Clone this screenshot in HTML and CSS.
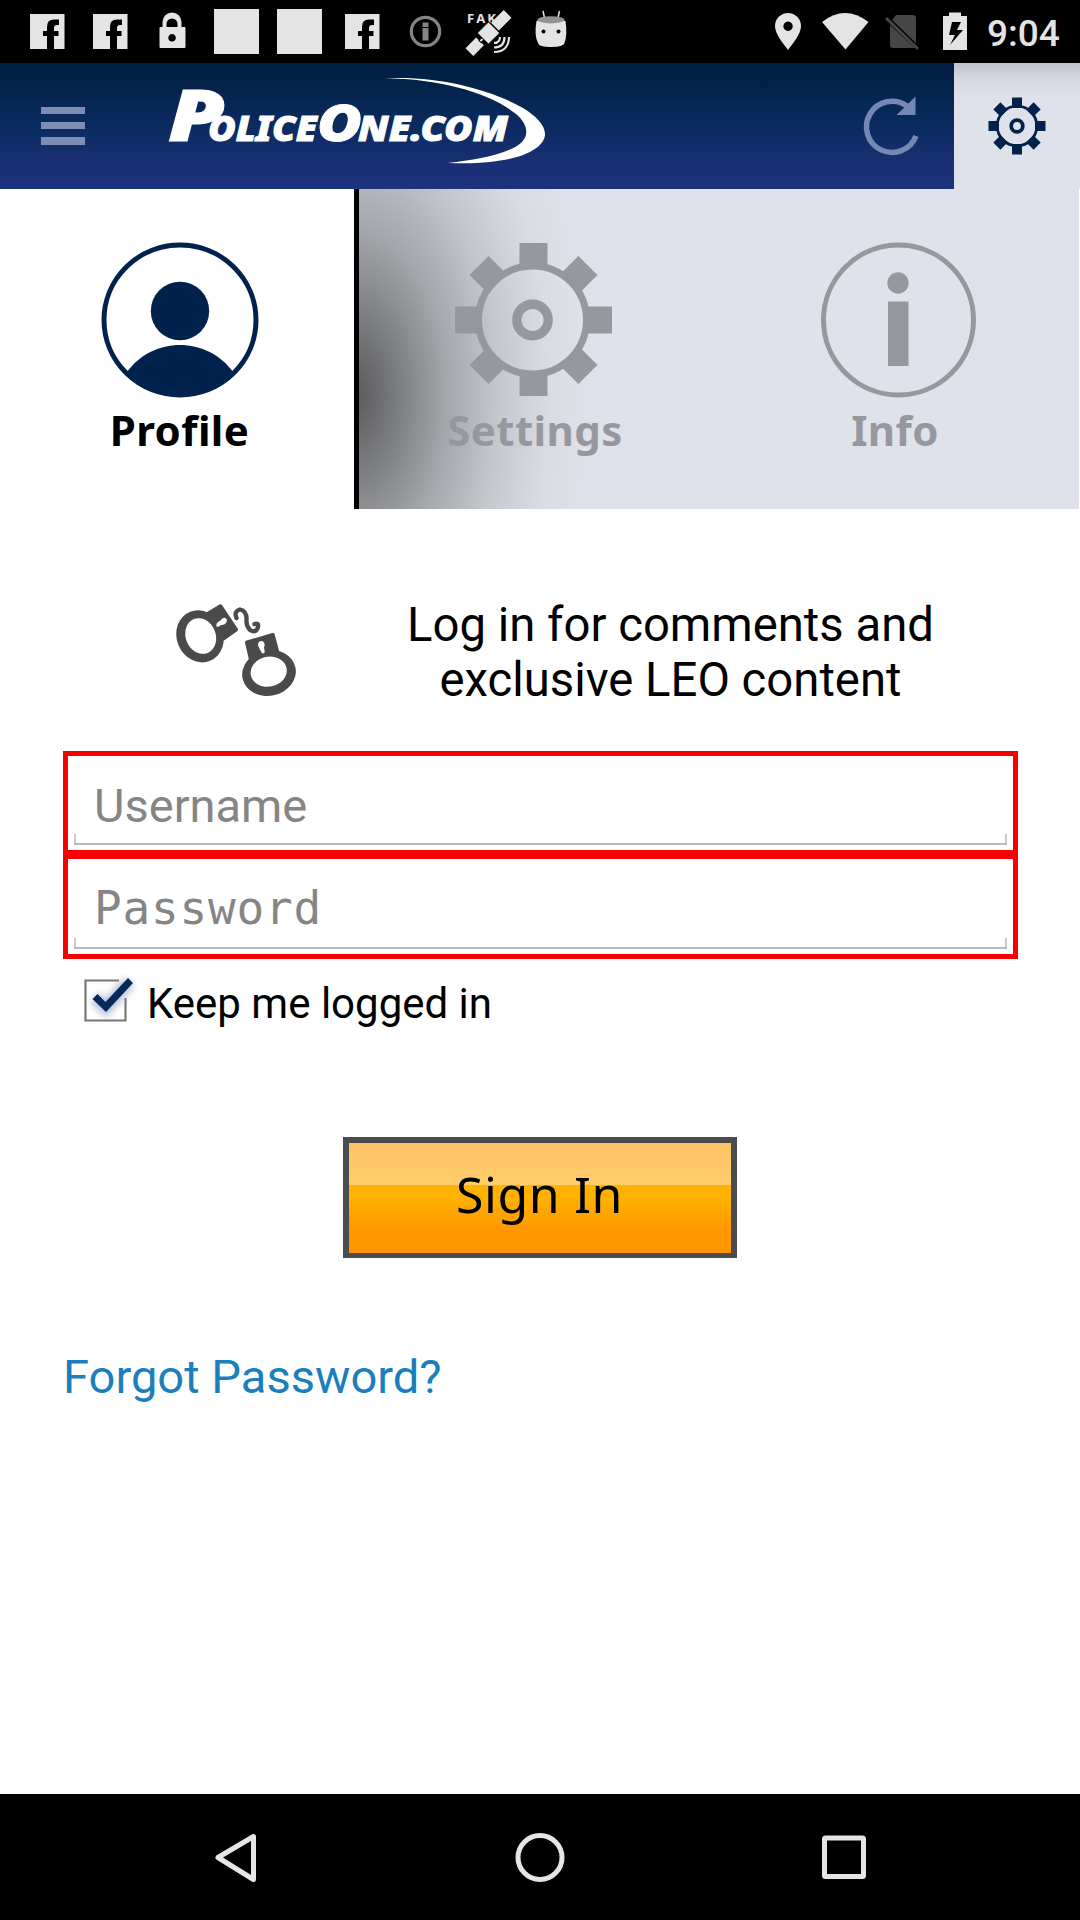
FILE: index.html
```html
<!DOCTYPE html>
<html lang="en">
<head>
<meta charset="utf-8">
<title>PoliceOne.com</title>
<link rel="stylesheet" href="styles.css">
</head>
<body>
<div class="status">
  <div class="notifications">
    <svg viewBox="0 0 45 45"><path d="M5 5h34.500v35H29V27h4.500v-5H29v-3q0-3 3-3h2v-5.500h-5q-7 0-7 7V22h-4v5h4v13H5z"/></svg>
    <svg viewBox="0 0 45 45"><path d="M5 5h34.500v35H29V27h4.500v-5H29v-3q0-3 3-3h2v-5.500h-5q-7 0-7 7V22h-4v5h4v13H5z"/></svg>
    <svg viewBox="0 0 45 45"><path fill-rule="evenodd" d="M8.500 18h3v-5a9.500 9.500 0 0 1 19 0v5h3q1 0 1 1v19q0 1-1 1h-24q-1 0-1-1V19q0-1 1-1zM15.500 18h11v-3a5.500 5.500 0 0 0-11 0zM21 25a3.800 3.800 0 1 0 .1 0z"/></svg>
    <svg viewBox="0 0 45 45"><path d="M0 0h45v45H0z"/></svg>
    <svg viewBox="0 0 45 45"><path d="M0 0h45v45H0z"/></svg>
    <svg viewBox="0 0 45 45"><path d="M5 5h34.500v35H29V27h4.500v-5H29v-3q0-3 3-3h2v-5.500h-5q-7 0-7 7V22h-4v5h4v13H5z"/></svg>
    <svg viewBox="0 0 45 45"><g class="dim"><circle cx="22.500" cy="22.500" r="14.200" fill="none" stroke="#858585" stroke-width="3.200"/><path d="M19.500 13.500h6v4.500h-6zM19.500 19h6v12.500h-6z"/></g></svg>
    <svg viewBox="0 0 45 45"><text class="fake" x="1" y="14" textLength="29">FAK</text><g transform="translate(22.500 24) rotate(-45)"><path d="M-27-5.500h15v11h-15zM9-5.500h18v11H9z"/><path d="M-8-8h16v16H-8zM-12-1.500h4v3h-4z" stroke="#000" stroke-width="1"/></g><path d="M28 34c5 0 6-4 6-6M28 38.500c8 0 10.500-5 10.500-10.500M28 43c11 0 15-7 15-15" fill="none" stroke="#e4e4e4" stroke-width="2.200"/></svg>
    <svg viewBox="-5 0 45 45"><path d="M9 2l2 9M25.500 2l-2 9" stroke="#e4e4e4" stroke-width="1.500"/><path d="M2.500 12q15-6 29 0 2 14-1 22-1 4-13.500 4T4 34Q0 26 2.500 12z"/><ellipse cx="17" cy="10.800" rx="13.500" ry="3.600" fill="#929292"/><circle cx="9.500" cy="22.500" r="2" fill="#000"/><circle cx="24.500" cy="22.500" r="2" fill="#000"/></svg>
  </div>
  <div class="system">
    <svg width="30" height="45" viewBox="0 0 30 45"><path fill-rule="evenodd" d="M15 4a13 13 0 0 1 13 13c0 8-8 17-13 24C10 34 2 25 2 17A13 13 0 0 1 15 4zM15 12.500a4.700 4.700 0 1 0 .1 0z"/></svg>
    <svg width="48" height="45" viewBox="0 0 48 45"><path d="M1 13Q24-5 47.500 13L24.500 40.500z"/></svg>
    <svg class="sim" width="36" height="45" viewBox="0 0 36 45"><path d="M13 6h17q3 0 3 3v25L9 11zM7 16l25 23H10q-3 0-3-3z"/><path d="M3 9l32 31" fill="none" stroke="#464646" stroke-width="3"/></svg>
    <svg class="battery" width="26" height="45" viewBox="0 0 26 45"><path fill-rule="evenodd" d="M7 3.500h12V7h6v34H1V7h6zM10 13L7 26h6L8 36 21 21h-6l4-8z"/></svg>
    <span class="clock">9:04</span>
  </div>
</div>

<header class="header">
  <div class="menu"><i></i><i></i><i></i></div>
  <svg class="logo" width="400" height="110" viewBox="0 0 400 110">
    <g class="logo-text">
      <text x="8" y="71" font-size="70" textLength="57" lengthAdjust="spacingAndGlyphs">P</text>
      <text x="48" y="71" font-size="34.500" textLength="109" lengthAdjust="spacingAndGlyphs">OLICE</text>
      <text x="157" y="71" font-size="49" textLength="45" lengthAdjust="spacingAndGlyphs">O</text>
      <text x="198" y="71" font-size="34.500" textLength="150" lengthAdjust="spacingAndGlyphs">NE.COM</text>
    </g>
    <path fill="#fff" d="M224 8.500C275 5 330 19 363 38c13 8 22 17 22 26 0 14-23 25-55 28-14 1.500-27 1.500-42 1 28-3 60-9 73-20 9-8 6-20-5-29-24-20-76-36-132-35.500z"/>
  </svg>
  <svg class="refresh" width="60" height="64" viewBox="0 0 60 64"><path d="M43 11A25.600 25.600 0 1 0 52 41" fill="none" stroke="#7587b5" stroke-width="5.500"/><path fill="#7587b5" d="M51.500 1.500V20H32.500z"/></svg>
  <div class="gear-cell">
    <svg width="60" height="60" viewBox="-30 -30 60 60"><g fill="#00224d"><path d="M-5-28.500H5V-18H-5zM-5 18H5v10.500H-5zM-28.500-5H-18V5h-10.500zM18-5h10.500V5H18z"/><path transform="rotate(45)" d="M-5-28.500H5V-18H-5zM-5 18H5v10.500H-5zM-28.500-5H-18V5h-10.500zM18-5h10.500V5H18z"/></g><g fill="none" stroke="#00224d"><circle r="19.800" stroke-width="2.800"/><circle r="5.800" stroke-width="3.800"/></g></svg>
  </div>
</header>

<nav class="tabs">
  <div class="tab active">
    <svg width="160" height="160" viewBox="-80 -80 160 160"><ellipse rx="76" ry="75" fill="none" stroke="#00224d" stroke-width="5"/><g fill="#00224d"><circle cy="-9" r="29.200"/><path d="M-53 52C-40 34-20 25 0 25S40 34 53 52Q30 77 0 77T-53 52z"/></g></svg>
    <span>Profile</span>
  </div>
  <div class="tab">
    <svg width="160" height="160" viewBox="-78.500 -80 160 160"><g fill="#97989f"><path d="M-14-77H14V-53H-14zM-14 53H14V76H-14zM-78.500-13.500H-53V13.500h-25.500zM53-13.500H78.500V13.500H53z"/><path transform="rotate(45)" d="M-13.500-77H13.500V-53H-13.500zM-13.500 53H13.500V77H-13.500zM-77-13.500H-53V13.500h-24zM53-13.500H77V13.500H53z"/></g><g fill="none" stroke="#97989f"><circle r="54" cx="-1" stroke-width="7"/><circle cx="-1" r="15.700" stroke-width="9.400"/></g></svg>
    <span>Settings</span>
  </div>
  <div class="tab">
    <svg width="160" height="160" viewBox="-83.500 -80 160 160"><circle r="75" fill="none" stroke="#97989f" stroke-width="5"/><g fill="#97989f"><circle cx="-.5" cy="-37" r="10.700"/><path d="M-10.500-18.500H10V46h-20.500z"/></g></svg>
    <span>Info</span>
  </div>
</nav>

<main class="content">
  <div class="intro">
    <svg width="130" height="110" viewBox="0 0 130 110">
      <g fill="#4a4a4a" stroke="#4a4a4a" stroke-linejoin="round">
        <ellipse cx="28" cy="47.300" rx="23.300" ry="26.500" transform="rotate(-22 28 47.300)" stroke="none"/>
        <path d="M36.500 24.500L48.500 17.300 64 40.500 50.500 50z" stroke-width="4"/>
        <ellipse cx="97" cy="84" rx="27" ry="22.800" transform="rotate(-12 97 84)" stroke="none"/>
        <path d="M75 53.500L100.800 46 105.300 63 79 70.500z" stroke-width="4"/>
      </g>
      <g fill="#fff">
        <ellipse cx="28.700" cy="47" rx="15" ry="18.300" transform="rotate(-22 28.700 47)"/>
        <ellipse cx="96.700" cy="82.700" rx="18.200" ry="15" transform="rotate(-12 96.700 82.700)"/>
        <path d="M44.500 37.500q-1-4 4-6 2-3.500 5-2.500 2.500 2 .5 5-2 2.500-5 2-2 2.500-4.500 1.500z"/>
        <path d="M87 58.500q-2-3 0-5.500 2.500-2 5 .5 1.500 2.500 0 5l.8 4.500q-1.300 2.500-3.300.5-1.500-2.500-2.500-5z"/>
      </g>
      <path d="M64.500 29Q61.500 22.500 68 20.500 75 22 74.500 31 74 37 78 41 84 44.500 86 38 87 33.500 82.500 35" fill="none" stroke="#4a4a4a" stroke-width="4.300" stroke-linecap="round"/>
    </svg>
    <p>Log in for comments and<br>exclusive LEO content</p>
  </div>
  <form class="login">
    <div class="field"><span>Username</span></div>
    <div class="field password"><span>Password</span></div>
    <label class="keep">
      <svg width="60" height="60" viewBox="0 0 60 60"><defs><filter id="glow" x="-50%" y="-50%" width="200%" height="200%"><feGaussianBlur stdDeviation="3.500"/></filter></defs><path d="M39 10.500H5.500v40h40V28" fill="none" stroke="#777" stroke-width="2.200"/><path d="M15 28l11 10 23-26" fill="none" stroke="#8792bb" stroke-width="13" opacity=".6" filter="url(#glow)"/><path d="M12.500 29l5-5 8 8L48 8l5 5-27 29z" fill="#06285a"/></svg>
      <span>Keep me logged in</span>
    </label>
    <div class="sign-in">Sign In</div>
    <a class="forgot">Forgot Password?</a>
  </form>
</main>

<footer class="navbar">
  <svg width="60" height="60" viewBox="-4 0 60 60"><path d="M8 30.500L43.500 9.500v43z"/></svg>
  <svg width="60" height="60" viewBox="0 0 60 60"><circle cx="30" cy="30.500" r="22"/></svg>
  <svg width="60" height="60" viewBox="0 0 60 60"><rect x="10.500" y="11" width="39" height="38.500" rx="1"/></svg>
</footer>
</body>
</html>
```

FILE: styles.css
```css
* { box-sizing: border-box; }
body {
  margin: 0;
  width: 1080px;
  height: 1920px;
  display: flex;
  flex-direction: column;
  background: #fff;
  color: #000;
  font-family: Roboto, sans-serif;
  overflow: hidden;
}
svg { display: block; flex: none; overflow: visible; }

.status {
  height: 63px;
  flex: none;
  display: flex;
  justify-content: space-between;
  padding: 9px 22px 0 25px;
  background: #000;
  fill: #e4e4e4;
}
.notifications { display: flex; gap: 18px; }
.notifications svg { width: 45px; height: 45px; }
.dim { fill: #858585; }
.fake { font: 700 13px "Noto Sans", sans-serif; }
.system { display: flex; }
.system svg + svg { margin-left: 18px; }
.system .sim { fill: #464646; }
.system svg.sim { margin-left: 14px; }
.system svg.battery { margin-left: 23px; }
.clock {
  margin-left: 19px;
  width: 71px;
  font-size: 37px;
  font-weight: 500;
  line-height: 49px;
  color: #e4e4e4;
  white-space: nowrap;
}

.header {
  height: 126px;
  flex: none;
  display: flex;
  align-items: flex-start;
  background: linear-gradient(#001e3e, #0a2b60 50%, #1a3074 80%, #1c337d);
}
.menu { width: 44px; margin: 44px 75px 0 41px; display: grid; gap: 8px; }
.menu i { height: 7.200px; background: #7f8db5; }
.logo { margin-top: 7px; }
.logo-text {
  font-family: "Noto Sans", sans-serif;
  font-weight: 900;
  font-style: italic;
  fill: #fff;
  stroke: #fff;
  stroke-width: .8px;
}
.refresh { margin: 32px 0 0 304px; }
.gear-cell {
  width: 126px;
  height: 126px;
  margin-left: auto;
  display: grid;
  place-items: center;
  background: linear-gradient(#bfc2ca, #d4d7df 12%, #dfe2ea 28%);
}

.tabs {
  width: 1079px;
  height: 320px;
  flex: none;
  display: grid;
  grid-template-columns: 359px 352px 368px;
  background: radial-gradient(ellipse 235px 430px at 357px 205px, #5b5b5e, #77787b 15%, #a3a6aa 38%, #c4c7cc 60%, #d9dce3 82%, #dfe2ea);
}
.tab {
  display: flex;
  flex-direction: column;
  align-items: center;
  padding-top: 51px;
  font: 700 42px/56px "Noto Sans", sans-serif;
  letter-spacing: .4px;
  color: #97989f;
}
.tab span { margin-top: 2px; }
.tab.active { background: #fff; color: #000; box-shadow: inset -5px 0 #000; }

.content { flex: 1; padding: 88px 62px 0 63px; }
.intro { display: flex; align-items: flex-start; }
.intro svg { margin: -8px 0 0 109px; }
.intro p {
  flex: 1;
  margin: 1px 0 0 22px;
  padding-right: 1px;
  text-align: center;
  font-size: 47.250px;
  line-height: 55px;
}
.login { margin-top: 43px; display: flex; flex-direction: column; align-items: flex-start; }
.field {
  width: 955px;
  height: 104px;
  border: 5px solid #f80000;
  padding: 0 6px 6px;
  display: flex;
}
.field span {
  flex: 1;
  padding-left: 20px;
  font-size: 47px;
  line-height: 99px;
  height: 89px;
  color: #858585;
  background:
    linear-gradient(#b8bac0, #b8bac0) 0 100% / 100% 2px no-repeat,
    linear-gradient(#c8cad0, #c8cad0) 0 100% / 2px 11px no-repeat,
    linear-gradient(#c8cad0, #c8cad0) 100% 100% / 2px 11px no-repeat;
}
.field.password { border-top-width: 4px; }
.field.password span {
  font-family: "DejaVu Sans Mono", monospace;
  font-size: 46px;
  letter-spacing: .8px;
  height: 90px;
}
.keep { display: flex; align-items: center; margin: 9px 0 0 17px; font-size: 42px; line-height: 64px; }
.keep span { margin: 4px 0 -4px 7px; }
.keep svg { margin-top: 0; }
.sign-in {
  align-self: center;
  width: 394px;
  height: 121px;
  margin: 105px 2px 0 0;
  border: 6px solid #4a4c4d;
  border-bottom-width: 5px;
  background: linear-gradient(#ffc267, #ffce6b 38%, #ffb400 38.500%, #ffb000 52%, #ff9800 78%, #ff9600);
  text-align: center;
  font: 50px/102px "Noto Sans", sans-serif;
  letter-spacing: .6px;
}
.forgot { margin-top: 91px; font-size: 47.100px; line-height: 55px; color: #1b7fbd; }

.navbar {
  height: 126px;
  flex: none;
  display: flex;
  justify-content: center;
  align-items: center;
  gap: 244px;
  background: #000;
}
.navbar svg { fill: none; stroke: #e6e6e6; stroke-width: 5px; stroke-linejoin: round; }
```
